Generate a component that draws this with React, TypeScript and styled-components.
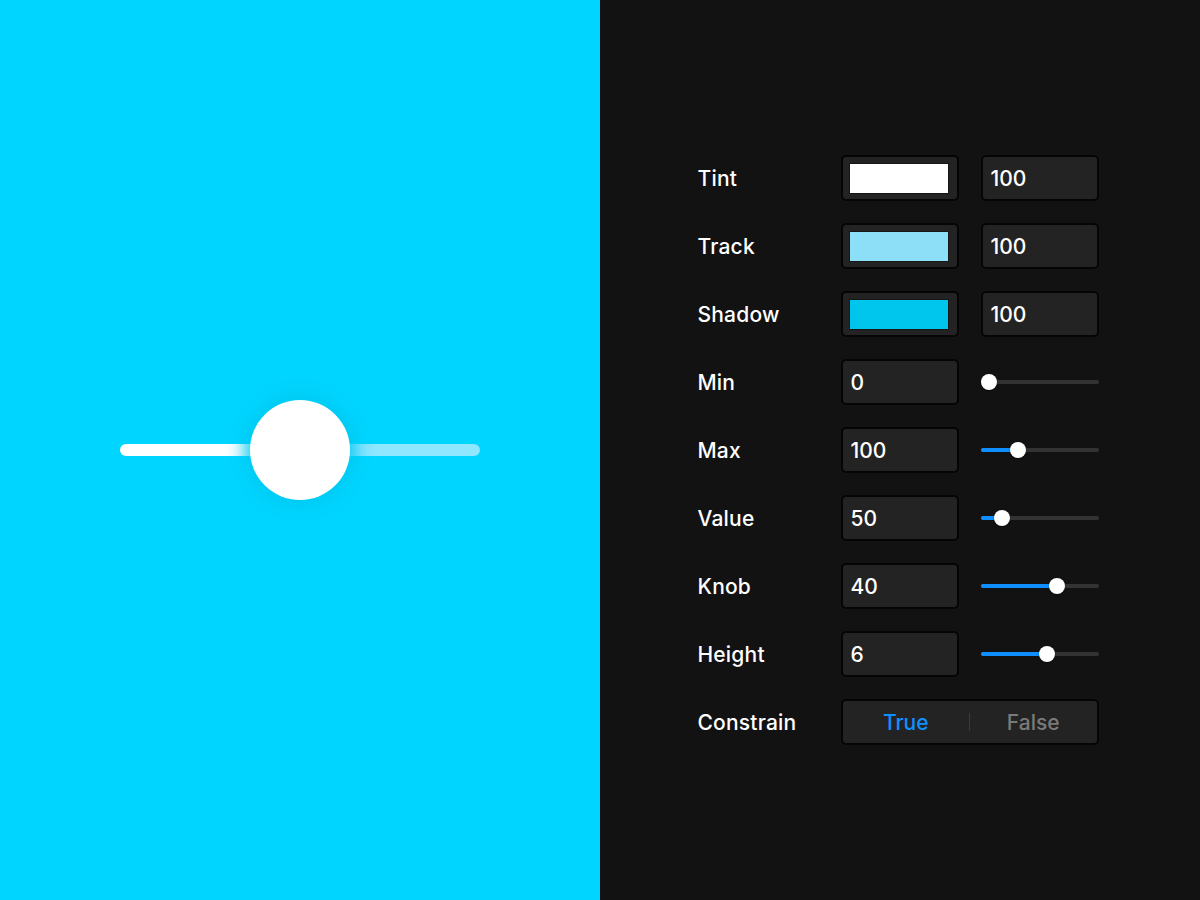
import { Fragment } from 'react';
import styled, { createGlobalStyle } from 'styled-components';

const GlobalStyle = createGlobalStyle`
    html, body {
        margin: 0;
        padding: 0;
        background: #121212;
    }
    * {
        box-sizing: border-box;
    }
`;

const Page = styled.div`
    display: flex;
    flex-direction: row;
    width: 1200px;
    height: 900px;
    font-family: Inter, "Liberation Sans", sans-serif;
`;

const Preview = styled.div`
    display: flex;
    align-items: center;
    justify-content: center;
    width: 600px;
    height: 100%;
    background-color: #00d5ff;
`;

const BigTrack = styled.div`
    position: relative;
    display: flex;
    width: 360px;
    height: 12px;
    border-radius: 6px;
`;

const BigFill = styled.div`
    height: 100%;
    width: 50%;
    background: #ffffff;
    border-radius: 6px 0 0 6px;
`;

const BigRest = styled.div`
    height: 100%;
    flex: 1;
    background: #8fe6ff;
    border-radius: 0 6px 6px 0;
`;

const BigKnob = styled.div`
    position: absolute;
    left: 50%;
    top: 50%;
    width: 100px;
    height: 100px;
    margin: -50px 0 0 -50px;
    border-radius: 50%;
    background: #ffffff;
    box-shadow: 0 0 18px 6px rgba(0, 200, 240, 0.95);
`;

const Panel = styled.div`
    display: flex;
    align-items: center;
    justify-content: center;
    flex: 1;
    height: 100%;
    background-color: #121212;
    padding-right: 4px;
`;

const Form = styled.div`
    display: grid;
    grid-template-columns: 143px 118px 22px 118px;
    grid-auto-rows: 46px;
    row-gap: 22px;
    align-items: center;
`;

const Label = styled.div`
    color: #ffffff;
    font-size: 21px;
    font-weight: 500;
    letter-spacing: 0.2px;
`;

const Box = styled.div<{ $col?: number }>`
    grid-column: ${p => p.$col ?? 2};
    display: flex;
    align-items: center;
    height: 46px;
    padding: 0 8px;
    background: #232323;
    border: 2px solid #050505;
    border-radius: 5px;
    color: #ffffff;
    font-size: 21px;
    font-weight: 500;
`;

const Swatch = styled.div<{ $color: string }>`
    width: 104px;
    height: 31px;
    margin-left: -2px;
    background: ${p => p.$color};
    border: 1px solid #161616;
`;

const SliderCell = styled.div`
    grid-column: 4;
    position: relative;
    height: 4px;
    border-radius: 2px;
    background: #333333;
`;

const SliderFill = styled.div`
    position: absolute;
    left: 0;
    top: 0;
    height: 4px;
    border-radius: 2px;
    background: #0f8eff;
`;

const SliderKnob = styled.div`
    position: absolute;
    top: -6px;
    width: 16px;
    height: 16px;
    border-radius: 50%;
    background: #ffffff;
    box-shadow: 0 1px 2px rgba(0, 0, 0, 0.4);
`;

const Segment = styled.div`
    grid-column: 2 / span 3;
    display: flex;
    align-items: center;
    height: 46px;
    background: #232323;
    border: 2px solid #050505;
    border-radius: 5px;
    font-size: 21px;
    font-weight: 500;
`;

const SegOption = styled.div<{ $active?: boolean }>`
    flex: 1;
    text-align: center;
    color: ${p => (p.$active ? '#0f90ff' : '#7a7a7a')};
`;

const SegDivider = styled.div`
    width: 1px;
    height: 18px;
    background: #3a3a3a;
`;

const colorRows = [
    { label: 'Tint', color: '#ffffff', value: '100' },
    { label: 'Track', color: '#8cdff7', value: '100' },
    { label: 'Shadow', color: '#00c6ee', value: '100' },
];

const sliderRows = [
    { label: 'Min', value: '0', t: 0 },
    { label: 'Max', value: '100', t: 0.28 },
    { label: 'Value', value: '50', t: 0.125 },
    { label: 'Knob', value: '40', t: 0.655 },
    { label: 'Height', value: '6', t: 0.56 },
];

const MiniSlider = ({ t }: { t: number }) => {
    const center = 8 + t * 104;
    return (
        <SliderCell>
            <SliderFill style={{ width: center }} />
            <SliderKnob style={{ left: center - 8 }} />
        </SliderCell>
    );
};

export default function App() {
    return (
        <>
            <GlobalStyle />
            <Page>
                <Preview>
                    <BigTrack>
                        <BigFill />
                        <BigRest />
                        <BigKnob />
                    </BigTrack>
                </Preview>
                <Panel>
                    <Form>
                        {colorRows.map(r => (
                            <Fragment key={r.label}>
                                <Label>{r.label}</Label>
                                <Box>
                                    <Swatch $color={r.color} />
                                </Box>
                                <Box $col={4}>{r.value}</Box>
                            </Fragment>
                        ))}
                        {sliderRows.map(r => (
                            <Fragment key={r.label}>
                                <Label>{r.label}</Label>
                                <Box>{r.value}</Box>
                                <MiniSlider t={r.t} />
                            </Fragment>
                        ))}
                        <Label>Constrain</Label>
                        <Segment>
                            <SegOption $active>True</SegOption>
                            <SegDivider />
                            <SegOption>False</SegOption>
                        </Segment>
                    </Form>
                </Panel>
            </Page>
        </>
    );
}
